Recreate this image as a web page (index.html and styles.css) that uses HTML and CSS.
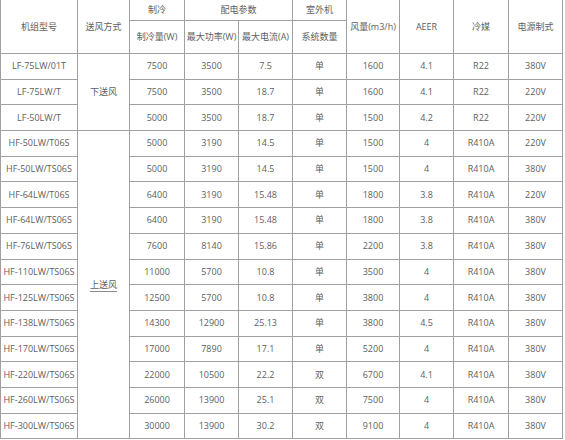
FILE: index.html
```html
<!DOCTYPE html>
<html lang="zh">
<head>
<meta charset="utf-8">
<link rel="stylesheet" href="styles.css">
</head>
<body>
<table class="spec">
  <colgroup>
    <col class="c77"><col class="c52"><col class="c55"><col class="c54"><col class="c54">
    <col class="c54"><col class="c53"><col class="c54"><col class="c55"><col class="c54">
  </colgroup>
  <tr class="h1">
    <td rowspan="2">机组型号</td>
    <td rowspan="2">送风方式</td>
    <td>制冷</td>
    <td colspan="2">配电参数</td>
    <td>室外机</td>
    <td rowspan="2">风量(m3/h)</td>
    <td rowspan="2">AEER</td>
    <td rowspan="2">冷媒</td>
    <td rowspan="2">电源制式</td>
  </tr>
  <tr class="h2">
    <td>制冷量(W)</td>
    <td>最大功率(W)</td>
    <td>最大电流(A)</td>
    <td>系统数量</td>
  </tr>
  <tr><td>LF-75LW/01T</td><td rowspan="3">下送风</td><td>7500</td><td>3500</td><td>7.5</td><td>单</td><td>1600</td><td>4.1</td><td>R22</td><td>380V</td></tr>
  <tr><td>LF-75LW/T</td><td>7500</td><td>3500</td><td>18.7</td><td>单</td><td>1600</td><td>4.1</td><td>R22</td><td>220V</td></tr>
  <tr><td>LF-50LW/T</td><td>5000</td><td>3500</td><td>18.7</td><td>单</td><td>1500</td><td>4.2</td><td>R22</td><td>220V</td></tr>
  <tr><td>HF-50LW/T06S</td><td rowspan="12"><span class="ul">上送风</span></td><td>5000</td><td>3190</td><td>14.5</td><td>单</td><td>1500</td><td>4</td><td>R410A</td><td>220V</td></tr>
  <tr><td>HF-50LW/TS06S</td><td>5000</td><td>3190</td><td>14.5</td><td>单</td><td>1500</td><td>4</td><td>R410A</td><td>380V</td></tr>
  <tr><td>HF-64LW/T06S</td><td>6400</td><td>3190</td><td>15.48</td><td>单</td><td>1800</td><td>3.8</td><td>R410A</td><td>220V</td></tr>
  <tr><td>HF-64LW/TS06S</td><td>6400</td><td>3190</td><td>15.48</td><td>单</td><td>1800</td><td>3.8</td><td>R410A</td><td>380V</td></tr>
  <tr><td>HF-76LW/TS06S</td><td>7600</td><td>8140</td><td>15.86</td><td>单</td><td>2200</td><td>3.8</td><td>R410A</td><td>380V</td></tr>
  <tr><td>HF-110LW/TS06S</td><td>11000</td><td>5700</td><td>10.8</td><td>单</td><td>3500</td><td>4</td><td>R410A</td><td>380V</td></tr>
  <tr><td>HF-125LW/TS06S</td><td>12500</td><td>5700</td><td>10.8</td><td>单</td><td>3800</td><td>4</td><td>R410A</td><td>380V</td></tr>
  <tr><td>HF-138LW/TS06S</td><td>14300</td><td>12900</td><td>25.13</td><td>单</td><td>3800</td><td>4.5</td><td>R410A</td><td>380V</td></tr>
  <tr><td>HF-170LW/TS06S</td><td>17000</td><td>7890</td><td>17.1</td><td>单</td><td>5200</td><td>4</td><td>R410A</td><td>380V</td></tr>
  <tr><td>HF-220LW/TS06S</td><td>22000</td><td>10500</td><td>22.2</td><td>双</td><td>6700</td><td>4.1</td><td>R410A</td><td>380V</td></tr>
  <tr><td>HF-260LW/TS06S</td><td>26000</td><td>13900</td><td>25.1</td><td>双</td><td>7500</td><td>4</td><td>R410A</td><td>380V</td></tr>
  <tr><td>HF-300LW/TS06S</td><td>30000</td><td>13900</td><td>30.2</td><td>双</td><td>9100</td><td>4</td><td>R410A</td><td>380V</td></tr>
</table>
</body>
</html>
```
FILE: styles.css
```css
html, body {
  margin: 0;
  padding: 0;
  background: #fff;
}
.spec {
  border-collapse: collapse;
  table-layout: fixed;
  width: 563px;
  margin-top: -1px;
  font-family: "Open Sans", "Noto Sans CJK SC", sans-serif;
  font-size: 9px;
  color: #606060;
}
.spec td {
  border: 1px solid #a0a0a0;
  text-align: center;
  vertical-align: middle;
  white-space: nowrap;
  overflow: hidden;
  padding: 0 1px;
  height: 24.7px;
  line-height: 12px;
}
.spec .h1 td { height: 20px; }
.spec .h2 td { height: 32px; }
.c77 { width: 77px; }
.c52 { width: 52px; }
.c53 { width: 53px; }
.c54 { width: 54px; }
.c55 { width: 55px; }
.ul {
  border-bottom: 1px solid #8a8a8a;
}
```
